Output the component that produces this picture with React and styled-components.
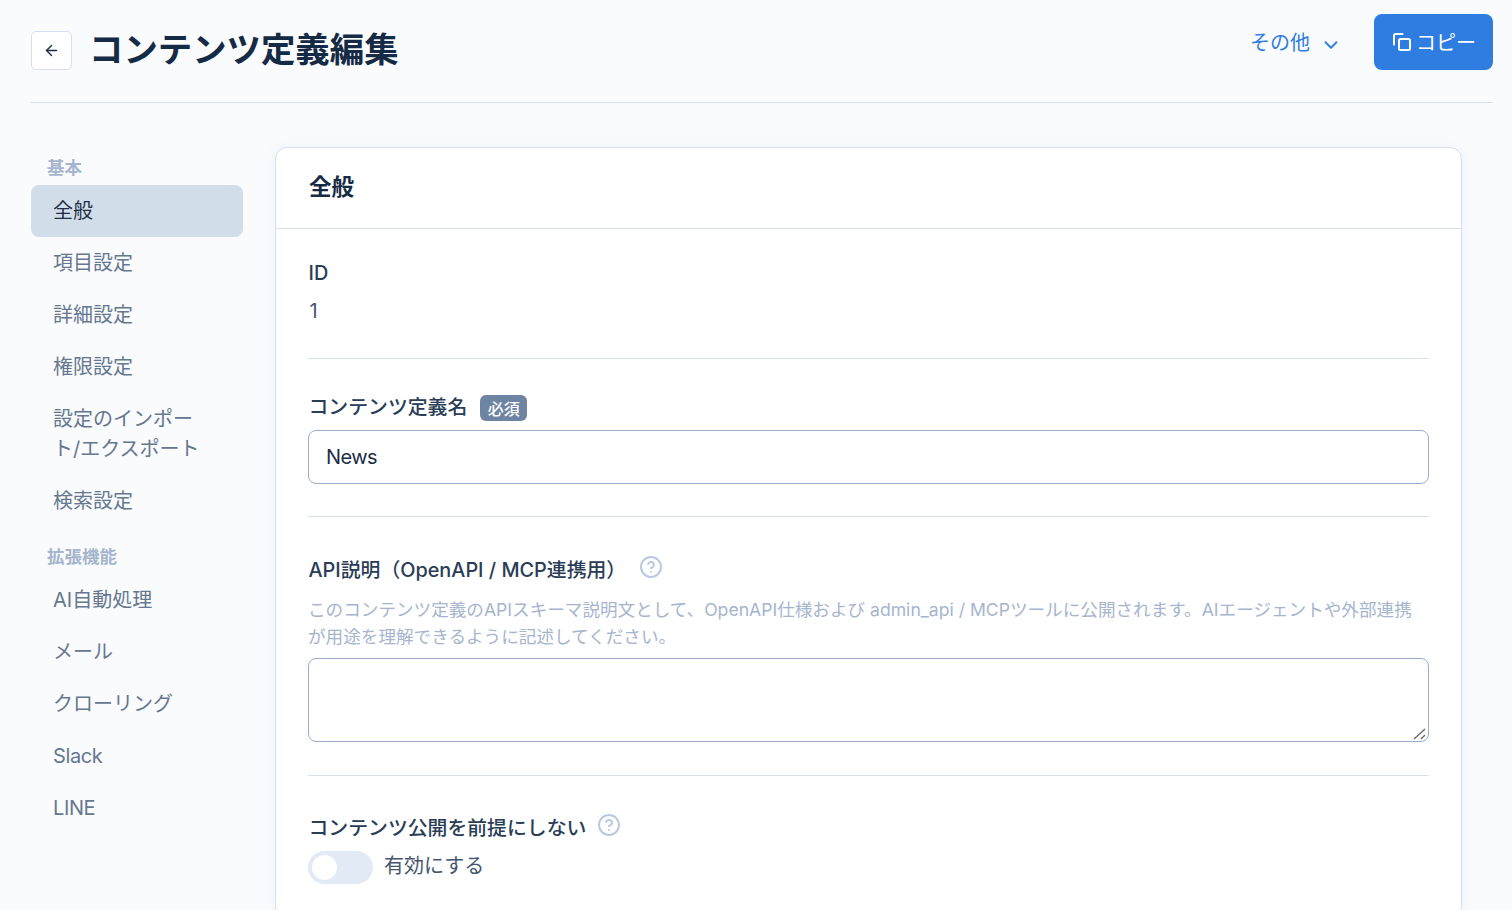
import styled, { createGlobalStyle } from "styled-components";
import { ArrowLeft, ChevronDown, CircleHelp } from "lucide-react";

const GlobalStyle = createGlobalStyle`
  html, body {
    margin: 0;
    height: 100%;
    overflow: hidden;
    background: #f9fbfd;
  }
  * {
    box-sizing: border-box;
  }
  body {
    font-family: "Inter", "Noto Sans CJK JP", sans-serif;
    color: #1c2e45;
  }
`;

const Page = styled.div`
  height: 910px;
  padding: 14px 19px 0 31px;
  overflow: hidden;
`;

const Header = styled.header`
  height: 89px;
  border-bottom: 1px solid #d5dfef;
  display: flex;
  justify-content: space-between;
  align-items: flex-start;
`;

const TitleGroup = styled.div`
  display: flex;
  align-items: center;
  gap: 17px;
  height: 70px;
  margin-top: 1px;
`;

const BackButton = styled.button`
  width: 41px;
  height: 39px;
  border: 1px solid #d5dfef;
  border-radius: 5px;
  background: #fff;
  color: #1c2e45;
  display: flex;
  align-items: center;
  justify-content: center;
  padding: 0;
`;

const Title = styled.h1`
  margin: 0;
  font-size: 34.4px;
  line-height: 50px;
  font-weight: 700;
  color: #152a45;
`;

const Actions = styled.div`
  display: flex;
  align-items: center;
  gap: 32px;
`;

const OtherButton = styled.button`
  border: 0;
  background: none;
  padding: 0 0 2px;
  color: #2f7de1;
  font: inherit;
  font-size: 20px;
  display: flex;
  align-items: center;
  gap: 10px;

  svg {
    margin-top: 8px;
  }
`;

const CopyButton = styled.button`
  width: 119px;
  height: 56px;
  border: 0;
  border-radius: 8px;
  background: #2f7de1;
  color: #fff;
  font: inherit;
  font-size: 20px;
  padding: 0 0 2px 18px;
  display: flex;
  align-items: center;
  gap: 4px;

  svg {
    margin-top: 2px;
  }
`;

const Columns = styled.div`
  display: flex;
  gap: 32px;
  padding: 44px 31px 0 0;
`;

const Sidebar = styled.nav`
  width: 212px;
  flex-shrink: 0;
  padding-top: 10px;
`;

const GroupLabel = styled.div`
  padding-left: 16px;
  margin: ${({ $first }) => ($first ? "0" : "19px")} 0 7px;
  font-size: 17.5px;
  line-height: 21px;
  font-weight: 700;
  color: #a6b5cd;
`;

const NavItem = styled.a`
  display: block;
  padding: 11px 30px 11px 22px;
  border-radius: 8px;
  font-size: 20px;
  line-height: 30px;
  letter-spacing: ${({ $latin }) => ($latin ? "-0.4px" : "0")};
  color: ${({ $active }) => ($active ? "#1c2e45" : "#66778f")};
  background: ${({ $active }) => ($active ? "#d2ddea" : "transparent")};
`;

const Card = styled.main`
  flex: 1;
  background: #fff;
  border: 1px solid #d5dfef;
  border-radius: 12px;
  box-shadow: 0 0 12px rgba(213, 223, 239, 0.25);
`;

const CardHeader = styled.div`
  height: 81px;
  padding: 0 33px 6px;
  border-bottom: 1px solid #d5dfef;
  display: flex;
  align-items: center;
`;

const CardTitle = styled.h2`
  margin: 0;
  font-size: 22.5px;
  font-weight: 700;
  color: #152a45;
`;

const CardBody = styled.div`
  padding: 0 32px;
`;

const Section = styled.section`
  padding-top: ${({ $top }) => $top ?? 32}px;
  padding-bottom: ${({ $bottom }) => $bottom ?? 32}px;
  border-bottom: ${({ $last }) => ($last ? "0" : "1px solid #d8e2ec")};
`;

const Label = styled.div`
  height: ${({ $height }) => $height || 30}px;
  margin-bottom: ${({ $gap }) => $gap ?? 9}px;
  padding-left: 0.5px;
  display: flex;
  align-items: center;
  font-size: 19.85px;
  font-weight: 500;
  color: #2a3d56;
`;

const Required = styled.span`
  margin: 6px 0 0 13px;
  width: 47px;
  height: 26px;
  border-radius: 6px;
  background: #6e84a3;
  color: #fff;
  font-size: 16px;
  font-weight: 500;
  display: flex;
  align-items: center;
  justify-content: center;
`;

const HelpIcon = styled(CircleHelp)`
  color: #b8c9e0;
  margin-left: ${({ $gap }) => $gap}px;
  margin-top: ${({ $lift }) => -$lift}px;
`;

const Value = styled.div`
  padding-left: 1.5px;
  font-size: 20px;
  line-height: 30px;
  color: #44566e;
`;

const TextInput = styled.input`
  display: block;
  width: 100%;
  height: 54px;
  padding: 0 17px;
  border: 1px solid #9aadcb;
  border-radius: 8px;
  background: #fff;
  color: #1c2e45;
  font: inherit;
  font-size: 20px;
  letter-spacing: -0.6px;
`;

const HelpText = styled.p`
  margin: 0 0 8px;
  font-size: 17.6px;
  line-height: 27px;
  color: #a6b5cd;
`;

const TextAreaWrap = styled.div`
  position: relative;
  height: 84px;
`;

const TextArea = styled.textarea`
  display: block;
  width: 100%;
  height: 100%;
  padding: 12px 17px;
  border: 1px solid #9aadcb;
  border-radius: 8px;
  background: #fff;
  font: inherit;
  font-size: 20px;
  resize: none;
`;

const Grip = styled.svg`
  position: absolute;
  right: 3px;
  bottom: 2px;
  pointer-events: none;
`;

const ToggleRow = styled.div`
  display: flex;
  align-items: center;
  gap: 11px;
  margin-top: 6px;
  font-size: 20px;
  color: #44566e;
`;

const ToggleText = styled.span`
  margin-bottom: 6px;
`;

const Toggle = styled.span`
  width: 65px;
  height: 33px;
  padding: 4px;
  border-radius: 17px;
  background: #e2eaf6;
  display: flex;
  align-items: center;

  &::before {
    content: "";
    width: 25px;
    height: 25px;
    border-radius: 50%;
    background: #fff;
  }
`;

function CopyIcon() {
  return (
    <svg width="20" height="20" viewBox="0 0 20 20" fill="none" stroke="currentColor" strokeWidth="2" strokeLinecap="round" strokeLinejoin="round">
      <rect x="7" y="7" width="11" height="11" rx="1.5" />
      <path d="M2 12.5V3.5A1.5 1.5 0 0 1 3.5 2H10.5" />
    </svg>
  );
}

const basicItems = ["全般", "項目設定", "詳細設定", "権限設定", "設定のインポート/エクスポート", "検索設定"];
const extensionItems = [
  { name: "AI自動処理" },
  { name: "メール" },
  { name: "クローリング" },
  { name: "Slack", latin: true },
  { name: "LINE", latin: true },
];

export default function App() {
  return (
    <>
      <GlobalStyle />
      <Page>
        <Header>
          <TitleGroup>
            <BackButton>
              <ArrowLeft size={17} />
            </BackButton>
            <Title>コンテンツ定義編集</Title>
          </TitleGroup>
          <Actions>
            <OtherButton>
              その他
              <ChevronDown size={22} />
            </OtherButton>
            <CopyButton>
              <CopyIcon />
              コピー
            </CopyButton>
          </Actions>
        </Header>
        <Columns>
          <Sidebar>
            <GroupLabel $first>基本</GroupLabel>
            {basicItems.map((item, i) => (
              <NavItem key={item} $active={i === 0}>
                {item}
              </NavItem>
            ))}
            <GroupLabel>拡張機能</GroupLabel>
            {extensionItems.map((item) => (
              <NavItem key={item.name} $latin={item.latin}>
                {item.name}
              </NavItem>
            ))}
          </Sidebar>
          <Card>
            <CardHeader>
              <CardTitle>全般</CardTitle>
            </CardHeader>
            <CardBody>
              <Section $top={29}>
                <Label $gap={8}>ID</Label>
                <Value>1</Value>
              </Section>
              <Section>
                <Label $height={28} $gap={11}>
                  コンテンツ定義名
                  <Required>必須</Required>
                </Label>
                <TextInput defaultValue="News" />
              </Section>
              <Section $bottom={33}>
                <Label $height={38} $gap={9}>
                  API説明（OpenAPI / MCP連携用）
                  <HelpIcon size={24} $gap={13} $lift={2} />
                </Label>
                <HelpText>
                  このコンテンツ定義のAPIスキーマ説明文として、OpenAPI仕様および admin_api / MCPツールに公開されます。AIエージェントや外部連携が用途を理解できるように記述してください。
                </HelpText>
                <TextAreaWrap>
                  <TextArea />
                  <Grip width="13" height="12" viewBox="0 0 13 12" fill="none" stroke="#666" strokeWidth="1.3">
                    <path d="M1 11L12 1M8 11L12 7" />
                  </Grip>
                </TextAreaWrap>
              </Section>
              <Section $last>
                <Label $height={36} $gap={0}>
                  コンテンツ公開を前提にしない
                  <HelpIcon size={24} $gap={11} $lift={2} />
                </Label>
                <ToggleRow>
                  <Toggle />
                  <ToggleText>有効にする</ToggleText>
                </ToggleRow>
              </Section>
            </CardBody>
          </Card>
        </Columns>
      </Page>
    </>
  );
}
